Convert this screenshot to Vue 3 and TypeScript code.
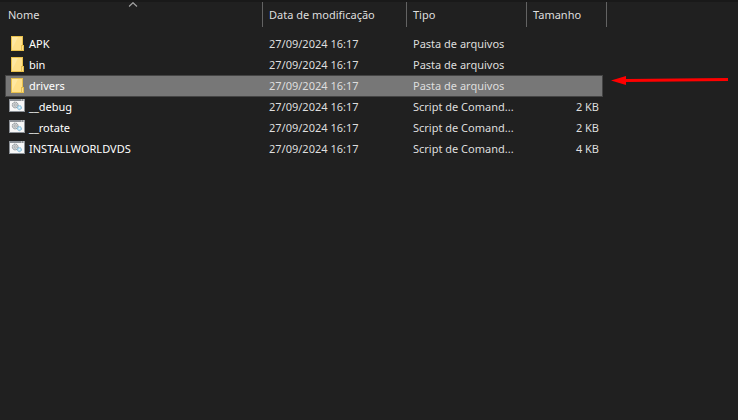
<script setup lang="ts">
import { ref } from 'vue'

interface FileEntry {
  name: string
  modified: string
  type: string
  size: string
  kind: 'folder' | 'script'
}

const entries: FileEntry[] = [
  { name: 'APK', modified: '27/09/2024 16:17', type: 'Pasta de arquivos', size: '', kind: 'folder' },
  { name: 'bin', modified: '27/09/2024 16:17', type: 'Pasta de arquivos', size: '', kind: 'folder' },
  { name: 'drivers', modified: '27/09/2024 16:17', type: 'Pasta de arquivos', size: '', kind: 'folder' },
  { name: '__debug', modified: '27/09/2024 16:17', type: 'Script de Comand...', size: '2 KB', kind: 'script' },
  { name: '__rotate', modified: '27/09/2024 16:17', type: 'Script de Comand...', size: '2 KB', kind: 'script' },
  { name: 'INSTALLWORLDVDS', modified: '27/09/2024 16:17', type: 'Script de Comand...', size: '4 KB', kind: 'script' },
]

const selected = ref('drivers')
</script>

<template>
  <main class="explorer">
    <table class="files">
      <colgroup>
        <col />
        <col class="col-date" />
        <col class="col-type" />
        <col class="col-size" />
        <col class="col-end" />
      </colgroup>
      <thead>
        <tr>
          <th scope="col" aria-sort="ascending">
            <button type="button">Nome</button>
            <svg class="sort" width="11" height="5" viewBox="0 0 11 5" aria-hidden="true">
              <path d="M0.5 4.5 4.5 0.7 8.5 4.5" fill="none" stroke="#a0a0a0" stroke-width="1.2" />
            </svg>
          </th>
          <th scope="col"><button type="button">Data de modificação</button></th>
          <th scope="col"><button type="button">Tipo</button></th>
          <th scope="col" colspan="2"><button type="button">Tamanho</button></th>
        </tr>
      </thead>
      <tbody>
        <tr
          v-for="entry in entries"
          :key="entry.name"
          :class="{ selected: entry.name === selected }"
          @click="selected = entry.name"
        >
          <td class="name">
            <div class="label">
              <svg v-if="entry.kind === 'folder'" width="16" height="16" viewBox="0 0 16 16" aria-hidden="true">
                <path d="M2 0h12v9h1v6H2z" fill="#e8c04c" />
                <path d="M3 1h10v8h-1v5H3z" fill="#ffe08a" />
                <path d="M3 1h6L3 13z" fill="#ffe8a2" />
                <path d="M13 10h1v4h-1z" fill="#ffe08a" />
              </svg>
              <svg v-else width="16" height="16" viewBox="0 0 16 16" aria-hidden="true">
                <path d="M0 0h16v13H0z" fill="#8b9096" />
                <path d="M1 2h14v10H1z" fill="#f7f7f7" />
                <path d="M12 .5h1v1h-1zM14 .5h1v1h-1z" fill="#e6e6e6" />
                <circle cx="6.2" cy="6" r="2.9" fill="#d3d6d8" stroke="#81868a" stroke-width="1" stroke-dasharray="1.4 .6" />
                <circle cx="6.2" cy="6" r="1.1" fill="#f7f7f7" stroke="#81868a" stroke-width=".6" />
                <circle cx="10.4" cy="8.6" r="2.1" fill="#b7dff2" stroke="#7bb2d0" stroke-width="1" stroke-dasharray="1.3 .6" />
                <circle cx="10.4" cy="8.6" r=".7" fill="#f7f7f7" />
              </svg>
              <span>{{ entry.name }}</span>
            </div>
          </td>
          <td>{{ entry.modified }}</td>
          <td>{{ entry.type }}</td>
          <td class="size">{{ entry.size }}</td>
          <td class="end"></td>
        </tr>
      </tbody>
    </table>
    <svg class="arrow" width="118" height="10" viewBox="0 0 118 10" aria-hidden="true">
      <path d="M0 5.5 15 1V4L117 3V6L15 7V10z" fill="#ff0000" />
    </svg>
  </main>
</template>

<style>
body {
  background: #202020;
}
</style>

<style scoped>
.explorer {
  display: flex;
  align-items: flex-start;
  gap: 4px;
  padding: 0 9px 0 5px;
  border-top: 2px solid #191919;
  color: #dedede;
  font: 11px/20px "Noto Sans", sans-serif;
}

.files {
  flex: 1;
  width: 100%;
  min-width: 0;
  table-layout: fixed;
  border-collapse: separate;
  border-spacing: 0;
}

.col-date {
  width: 144px;
}

.col-type {
  width: 120px;
}

.col-size {
  width: 76px;
}

.col-end {
  width: 4px;
}

th {
  position: relative;
  height: 25px;
  padding: 0;
  border-right: 1px solid #636363;
  font-weight: 400;
}

th button {
  display: block;
  width: 100%;
  padding: 0 6px;
  border: 0;
  background: none;
  color: inherit;
  font: inherit;
  text-align: left;
}

th:first-child button {
  padding-left: 3px;
}

.sort {
  position: absolute;
  top: 0;
  left: 50%;
  transform: translateX(-50%);
}

tbody::before {
  content: "";
  display: table-row;
  height: 6px;
}

td {
  height: 21px;
  padding: 0 6px;
  white-space: nowrap;
  overflow: hidden;
}

td.name {
  padding-left: 4px;
  color: #ffffff;
}

.label {
  display: flex;
  align-items: center;
  gap: 4px;
}

td.size {
  padding-right: 4px;
  text-align: right;
}

td.end {
  padding: 0;
}

.selected td:not(.end) {
  background: #777777;
  box-shadow: inset 0 1px #444444, 0 1px #444444;
}

.selected td.name {
  border-left: 1px solid #444444;
  padding-left: 3px;
}

.selected td.size {
  border-right: 1px solid #444444;
}

.arrow {
  flex: none;
  margin-top: 73px;
}
</style>
